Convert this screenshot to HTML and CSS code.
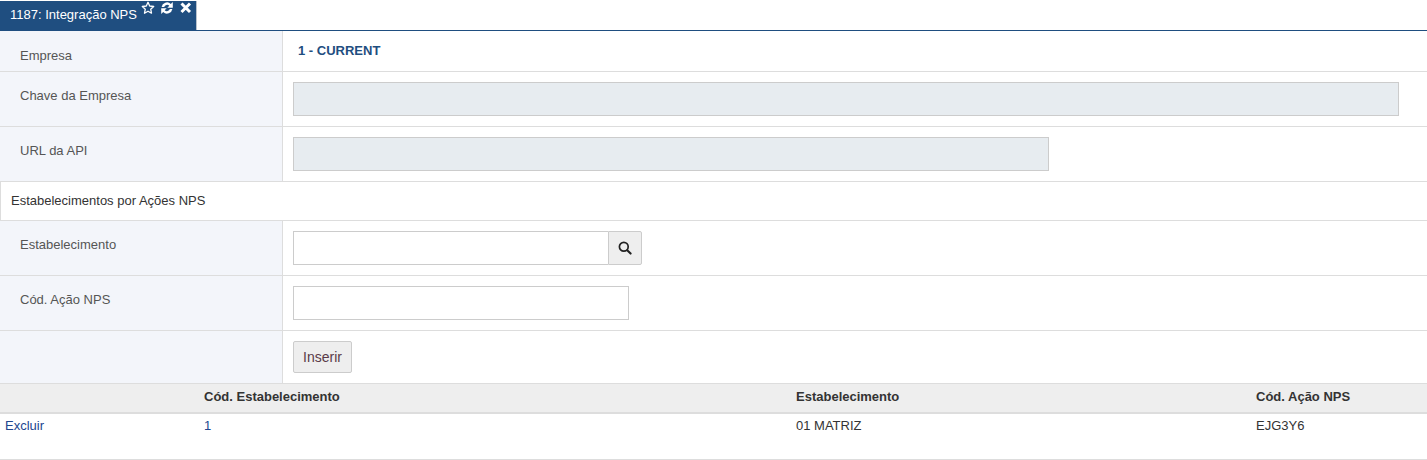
FILE: index.html
```html
<!DOCTYPE html>
<html lang="pt">
<head>
<meta charset="utf-8">
<title>1187: Integração NPS</title>
<link rel="stylesheet" href="styles.css">
</head>
<body>
<div class="tabbar">
  <div class="tab">
    <span class="tab-title">1187: Integração NPS</span>
    <span class="tab-icons">
      <svg class="ico star" viewBox="0 0 14 14"><path d="M7 1.3l1.7 3.7 4 .5-3 2.7.8 4L7 10.2l-3.5 2 .8-4-3-2.7 4-.5z" fill="none" stroke="#fff" stroke-width="1.3" stroke-linejoin="round"/></svg>
      <svg class="ico" viewBox="0 0 14 14"><path d="M1.6 6A5.5 5.5 0 0 1 10.8 2.9L12.8 1V6.8H7.3L9.3 4.8A3 3 0 0 0 4.2 6zM12.4 8A5.5 5.5 0 0 1 3.2 11.1L1.2 13V7.2H6.7L4.7 9.2A3 3 0 0 0 9.8 8z" fill="#fff"/></svg>
      <svg class="ico" viewBox="0 0 14 14"><path d="M2.5 2.5l8.5 8.5M11 2.5l-8.5 8.5" stroke="#fff" stroke-width="3" fill="none"/></svg>
    </span>
  </div>
</div>
<div class="row row-first">
  <div class="label label-first">Empresa</div>
  <div class="value company">1 - CURRENT</div>
</div>
<div class="row">
  <div class="label">Chave da Empresa</div>
  <div class="value"><div class="input disabled wide"></div></div>
</div>
<div class="row">
  <div class="label">URL da API</div>
  <div class="value"><div class="input disabled medium"></div></div>
</div>
<div class="section">Estabelecimentos por Ações NPS</div>
<div class="row">
  <div class="label">Estabelecimento</div>
  <div class="value">
    <div class="group">
      <div class="input group-input"></div>
      <div class="addon">
        <svg class="search" viewBox="0 0 14 14"><circle cx="5.8" cy="5.8" r="4.4" fill="none" stroke="#222" stroke-width="1.7"/><path d="M9.2 9.2l3.4 3.4" stroke="#222" stroke-width="2.1" stroke-linecap="round"/></svg>
      </div>
    </div>
  </div>
</div>
<div class="row">
  <div class="label">Cód. Ação NPS</div>
  <div class="value"><div class="input narrow"></div></div>
</div>
<div class="row row-button">
  <div class="label"></div>
  <div class="value"><button class="btn" type="button">Inserir</button></div>
</div>
<table class="grid">
  <thead>
    <tr><th class="c1"></th><th class="c2">Cód. Estabelecimento</th><th class="c3">Estabelecimento</th><th>Cód. Ação NPS</th></tr>
  </thead>
  <tbody>
    <tr><td><a class="link">Excluir</a></td><td><a class="link">1</a></td><td>01 MATRIZ</td><td>EJG3Y6</td></tr>
  </tbody>
</table>
</body>
</html>
```
FILE: styles.css
```css
* { box-sizing: border-box; }
html, body { margin: 0; padding: 0; background: #fff; }
body { font-family: "Liberation Sans", Arial, sans-serif; font-size: 13px; color: #333; height: 460px; overflow: hidden; }

.tabbar { height: 31px; padding-top: 1px; border-bottom: 1px solid #1f4e80; display: flex; }
.tab { width: 197px; height: 29px; background: #1f4e80; border-right: 1px solid #b9c2cc; color: #fff; display: flex; padding-left: 10px; }
.tab-title { font-size: 13px; line-height: 27px; white-space: nowrap; }
.tab-icons { display: flex; gap: 5px; padding-left: 4px; height: 14px; flex: none; }
.ico { width: 14px; height: 14px; display: block; }

.row { display: flex; height: 55px; border-bottom: 1px solid #ddd; }
.row-first { height: 41px; }
.row-button { height: 53px; }
.label { width: 283px; flex: none; background: #f3f5fa; border-right: 1px solid #ddd; padding: 15px 0 0 20px; color: #555; font-size: 13px; line-height: 17px; }
.label-first { padding-top: 16px; }
.value { flex: 1; padding: 10px 0 0 10px; }
.company { padding: 12px 0 0 15px; color: #1f4e80; font-weight: bold; font-size: 13px; line-height: 15px; }

.input { height: 34px; border: 1px solid #ccc; background: #fff; }
.disabled { background: #e7ecf0; }
.wide { width: 1106px; }
.medium { width: 756px; }
.narrow { width: 336px; }

.group { display: flex; width: 349px; }
.group-input { flex: 1; border-right: 0; }
.addon { width: 34px; height: 34px; background: #eee; border: 1px solid #ccc; border-radius: 0 2px 2px 0; display: flex; align-items: center; justify-content: center; }
.search { width: 14px; height: 14px; display: block; }

.section { height: 39px; border-bottom: 1px solid #ddd; border-left: 1px solid #ddd; padding-left: 10px; font-size: 13px; line-height: 38px; color: #333; }

.btn { display: block; height: 32px; width: 59px; padding: 0; background: #eee; border: 1px solid #ccc; border-radius: 2px; font-family: inherit; font-size: 14px; color: #5a3a48; }

.grid { width: 100%; table-layout: fixed; border-collapse: separate; border-spacing: 0; font-size: 13px; }
.grid th { height: 30px; background: #eee; border-bottom: 2px solid #ddd; text-align: left; padding: 0 0 3px; color: #333; font-weight: bold; }
.grid td { height: 46px; vertical-align: top; padding: 4px 0 0; border-bottom: 1px solid #ddd; line-height: 15px; color: #333; }
.grid th:first-child, .grid td:first-child { padding-left: 5px; }
.c1 { width: 204px; }
.c2 { width: 592px; }
.c3 { width: 460px; }
.link { color: #21468f; }
```
